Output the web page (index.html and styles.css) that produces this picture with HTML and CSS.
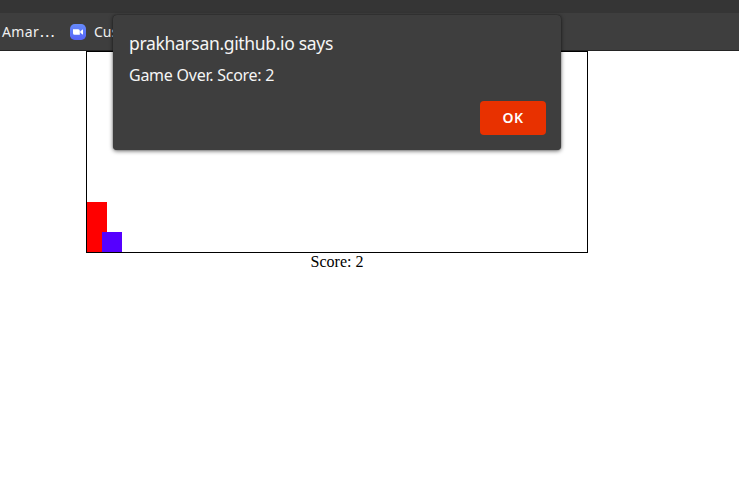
FILE: index.html
```html
<!DOCTYPE html>
<html lang="en">
<head>
<meta charset="utf-8">
<title>Game</title>
<link rel="stylesheet" href="styles.css">
</head>
<body>
<header class="toolbar"></header>
<nav class="bookmarks">
  <span class="bookmark">Amar<span class="ellipsis">…</span></span>
  <svg class="bookmark-icon" width="16" height="16" viewBox="0 0 16 16">
    <defs><linearGradient id="blue" x1="0" y1="0" x2="0" y2="1"><stop offset="0" stop-color="#668bfb"/><stop offset="1" stop-color="#5562f6"/></linearGradient></defs>
    <rect width="16" height="16" rx="4.8" fill="url(#blue)"/>
    <path d="M3 5.2h5.2a1.6 1.6 0 0 1 1.6 1.6v4H4.6A1.6 1.6 0 0 1 3 9.200zM10.300 7.200 13 5.300v5.400L10.300 8.800z" fill="#fff"/>
  </svg>
  <span class="bookmark">Cus</span>
</nav>
<main class="game">
  <div class="board">
    <div class="player"></div>
    <div class="obstacle"></div>
  </div>
  <div class="score">Score: 2</div>
</main>
<section class="dialog" role="dialog">
  <h1 class="dialog-title">prakharsan.github.io says</h1>
  <p class="dialog-message">Game Over. Score: 2</p>
  <button class="ok">OK</button>
</section>
</body>
</html>
```
FILE: styles.css
```css
* { box-sizing: border-box; }
body {
  margin: 0;
  height: 496px;
  overflow: hidden;
  background: #fff;
  font-family: "Noto Sans", sans-serif;
}
.toolbar { height: 13px; background: #353535; }
.bookmarks {
  display: flex;
  align-items: center;
  height: 38px;
  padding-left: 2px;
  background: #3e3e3e;
  border-bottom: 1px solid #242424;
  color: #f0f0f0;
  font-size: 14px;
  line-height: 20px;
}
.bookmark { white-space: nowrap; }
.bookmark:first-child { width: 52px; letter-spacing: 0.4px; }
.ellipsis { font-family: "DejaVu Sans", sans-serif; font-size: 16px; line-height: 1; }
.bookmark-icon { margin: 0 8px 0 16px; flex: none; }
.game { width: 502px; margin-left: 86px; }
.board {
  position: relative;
  height: 202px;
  border: 1px solid #000;
}
.player, .obstacle { position: absolute; bottom: 0; width: 20px; }
.player { left: 0; height: 50px; background: #f00; }
.obstacle { left: 15px; height: 20px; background: #50f; }
.score {
  font: 16px/18px "Liberation Serif", serif;
  text-align: center;
  color: #000;
}
.dialog {
  position: absolute;
  top: 15px;
  left: 113px;
  width: 448px;
  height: 135px;
  padding: 15px 15px 15px 16px;
  display: flex;
  flex-direction: column;
  background: #3e3e3e;
  border-radius: 4px;
  box-shadow: 0 0 1px rgba(0,0,0,.6), 0 1px 4px rgba(0,0,0,.6);
  color: #f5f5f5;
  white-space: nowrap;
}
.dialog-title {
  margin: 0;
  font-size: 17.5px;
  font-weight: 400;
  line-height: 26px;
  letter-spacing: -0.33px;
}
.dialog-message {
  margin: 7px 0 0;
  font-size: 16px;
  line-height: 24px;
  letter-spacing: -0.25px;
}
.ok {
  width: 66px;
  height: 34px;
  margin: auto 0 0 auto;
  padding: 0;
  border: 0;
  border-radius: 4px;
  background: #e83100;
  color: #fff;
  font: 600 14px/20px "Noto Sans", sans-serif;
  letter-spacing: 0.5px;
}
```
